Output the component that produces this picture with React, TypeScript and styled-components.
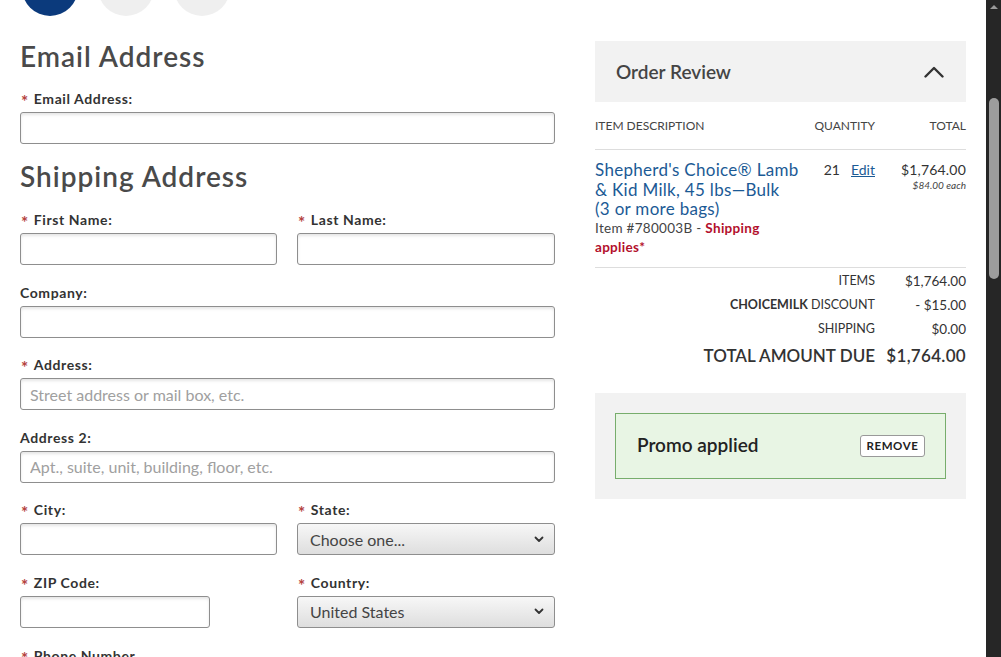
import React from "react";
import styled, { createGlobalStyle } from "styled-components";

const Global = createGlobalStyle`
  html, body { margin: 0; padding: 0; height: 657px; overflow: hidden; background: #fff; }
  body { font-family: Lato, "Open Sans", Arial, sans-serif; color: #333; }
  * { box-sizing: border-box; }
`;

const Shell = styled.div`
  display: flex;
  height: 657px;
  width: 1001px;
`;

const Page = styled.div`
  flex: 1;
  overflow: hidden;
  padding: 0 20px;
`;

const ScrollTrack = styled.div`
  width: 15px;
  flex: none;
  background: #262626;
  display: flex;
  flex-direction: column;
  align-items: center;
  padding-top: 5px;
`;

const ScrollArrow = styled.div`
  width: 0;
  height: 0;
  border-left: 4px solid transparent;
  border-right: 4px solid transparent;
  border-bottom: 4px solid #9a9a9a;
`;

const ScrollThumb = styled.div`
  margin-top: 89px;
  width: 10px;
  height: 181px;
  border-radius: 5px;
  background: #9d9d9d;
`;

const Steps = styled.div`
  display: flex;
  gap: 20px;
  margin-top: -40px;
  padding-left: 2px;
`;

const Step = styled.div<{ $active?: boolean }>`
  width: 56px;
  height: 56px;
  border-radius: 50%;
  background: ${(p) => (p.$active ? "#0b3a7c" : "#efefef")};
`;

const Columns = styled.div`
  display: grid;
  grid-template-columns: 535px 371px;
  column-gap: 40px;
  align-items: start;
`;

const FormCol = styled.div`
  display: flex;
  flex-direction: column;
`;

const Heading = styled.h2<{ $top: number }>`
  margin: ${(p) => p.$top}px 0 0;
  font-size: 28px;
  line-height: 34px;
  font-weight: 600;
  color: #4a4a4a;
  letter-spacing: 1px;
`;

const Fields = styled.div<{ $top: number }>`
  display: grid;
  grid-template-columns: 257px 258px;
  column-gap: 20px;
  row-gap: 18.6px;
  margin-top: ${(p) => p.$top}px;
`;

const Field = styled.div<{ $span?: boolean; $w?: number }>`
  grid-column: ${(p) => (p.$span ? "1 / -1" : "auto")};
  display: flex;
  flex-direction: column;
  gap: 4px;
  ${(p) => (p.$w ? `width: ${p.$w}px;` : "")}
`;

const Label = styled.label`
  height: 18px;
  font-size: 14px;
  line-height: 18px;
  font-weight: 700;
  color: #333;
  letter-spacing: 0.6px;
  display: flex;
  align-items: center;
  gap: 5px;
`;

const Star = styled.span`
  color: #b4423d;
  font-weight: 700;
  font-size: 17px;
  line-height: 1;
  height: 18px;
  margin-left: 1px;
  transform: translateY(3px);
`;

const Input = styled.input`
  width: 100%;
  height: 32px;
  border: 1px solid #8e8e8e;
  border-radius: 3px;
  background: #fff;
  box-shadow: inset 0 2px 3px rgba(0, 0, 0, 0.1);
  padding: 0 9px;
  font-family: Lato, Arial, sans-serif;
  font-size: 16px;
  color: #333;
  &::placeholder { color: #a0a0a0; }
`;

const SelectBox = styled.div`
  height: 32px;
  border: 1px solid #8e8e8e;
  border-radius: 3px;
  background: linear-gradient(#f7f7f7, #dedede);
  display: flex;
  align-items: center;
  padding: 0 10px 0 12px;
  font-size: 16px;
  color: #444;
`;

const SelectText = styled.span`
  flex: 1;
`;

const OrderCol = styled.div`
  display: flex;
  flex-direction: column;
  margin-top: 25px;
`;

const ReviewHeader = styled.div`
  height: 61px;
  background: #f2f2f2;
  display: flex;
  align-items: center;
  justify-content: space-between;
  padding: 0 22px 0 21px;
`;

const ReviewTitle = styled.div`
  font-size: 19px;
  font-weight: 600;
  color: #444;
`;

const Grid = styled.div`
  display: grid;
  grid-template-columns: 210px 1fr 91px;
`;

const HeadCell = styled.div<{ $right?: boolean }>`
  font-size: 12px;
  line-height: 17px;
  color: #444;
  text-transform: uppercase;
  padding: 15px 0;
  text-align: ${(p) => (p.$right ? "right" : "left")};
  border-bottom: 1px solid #ddd;
`;

const ItemRow = styled(Grid)`
  padding: 10px 0 10px;
  border-bottom: 1px solid #ddd;
`;

const ItemTitle = styled.a`
  display: block;
  font-size: 17px;
  line-height: 19.5px;
  letter-spacing: 0.3px;
  color: #1b5a95;
  text-decoration: none;
`;

const NoWrap = styled.span`
  white-space: nowrap;
`;

const ItemMeta = styled.div`
  font-size: 13.5px;
  line-height: 19px;
  letter-spacing: 0.3px;
  color: #444;
`;

const ShipNote = styled.b`
  color: #b3102c;
  font-weight: 700;
`;

const Qty = styled.div`
  display: flex;
  justify-content: flex-end;
  gap: 11px;
  font-size: 14px;
  line-height: 20px;
  color: #333;
`;

const EditLink = styled.a`
  color: #1b5a95;
  text-decoration: underline;
`;

const Price = styled.div`
  text-align: right;
  font-size: 14px;
  line-height: 20px;
  letter-spacing: 0.2px;
  color: #333;
`;

const Each = styled.div`
  font-size: 10px;
  line-height: 10px;
  font-style: italic;
  letter-spacing: 0;
  color: #444;
`;

const Summary = styled.div`
  display: grid;
  grid-template-columns: 1fr 91px;
  padding-top: 1px;
`;

const SumLabel = styled.div<{ $total?: boolean }>`
  text-align: right;
  font-size: ${(p) => (p.$total ? "17px" : "12.5px")};
  line-height: ${(p) => (p.$total ? "28px" : "24px")};
  font-weight: ${(p) => (p.$total ? 600 : 400)};
  color: #333;
  text-transform: uppercase;
  ${(p) => (p.$total ? "margin-top: 1px;" : "")}
`;

const SumValue = styled(SumLabel)`
  font-size: ${(p) => (p.$total ? "17px" : "13.5px")};
  letter-spacing: ${(p) => (p.$total ? "0.3px" : "0")};
`;

const PromoWrap = styled.div`
  margin-top: 23px;
  background: #f2f2f2;
  padding: 20px;
`;

const PromoBox = styled.div`
  height: 66px;
  background: #e8f5e4;
  border: 1px solid #77ad6c;
  display: flex;
  align-items: center;
  justify-content: space-between;
  padding: 0 20px 0 21px;
`;

const PromoText = styled.div`
  font-size: 19px;
  font-weight: 600;
  color: #222;
  margin-top: -2px;
`;

const RemoveBtn = styled.button`
  width: 65px;
  height: 22px;
  background: #fff;
  border: 1px solid #999;
  border-radius: 3px;
  font-family: Lato, Arial, sans-serif;
  font-size: 11.5px;
  font-weight: 700;
  letter-spacing: 0.6px;
  color: #222;
  padding: 0;
`;

const Chevron = () => (
  <svg width={20} height={12} viewBox="0 0 20 12" fill="none">
    <path d="M1.5 10.5 L10 2 L18.5 10.5" stroke="#333" strokeWidth="2.4" strokeLinecap="round" strokeLinejoin="round" />
  </svg>
);

const SmallChevronDown = () => (
  <svg width="10" height="7" viewBox="0 0 10 7" fill="none">
    <path d="M1.5 1.5 L5 5 L8.5 1.5" stroke="#333" strokeWidth="1.8" strokeLinecap="round" strokeLinejoin="round" />
  </svg>
);

const Req = ({ children }: { children: React.ReactNode }) => (
  <Label>
    <Star>*</Star>
    <span>{children}</span>
  </Label>
);

export default function App() {
  return (
    <>
      <Global />
      <Shell>
        <Page>
          <Steps>
            <Step $active />
            <Step />
            <Step />
          </Steps>
          <Columns>
            <FormCol>
              <Heading $top={23}>Email Address</Heading>
              <Fields $top={17}>
                <Field $span>
                  <Req>Email Address:</Req>
                  <Input type="email" />
                </Field>
              </Fields>
              <Heading $top={15}>Shipping Address</Heading>
              <Fields $top={18}>
                <Field>
                  <Req>First Name:</Req>
                  <Input />
                </Field>
                <Field>
                  <Req>Last Name:</Req>
                  <Input />
                </Field>
                <Field $span>
                  <Label>Company:</Label>
                  <Input />
                </Field>
                <Field $span>
                  <Req>Address:</Req>
                  <Input placeholder="Street address or mail box, etc." />
                </Field>
                <Field $span>
                  <Label>Address 2:</Label>
                  <Input placeholder="Apt., suite, unit, building, floor, etc." />
                </Field>
                <Field>
                  <Req>City:</Req>
                  <Input />
                </Field>
                <Field>
                  <Req>State:</Req>
                  <SelectBox>
                    <SelectText>Choose one...</SelectText>
                    <SmallChevronDown />
                  </SelectBox>
                </Field>
                <Field $w={190}>
                  <Req>ZIP Code:</Req>
                  <Input />
                </Field>
                <Field>
                  <Req>Country:</Req>
                  <SelectBox>
                    <SelectText>United States</SelectText>
                    <SmallChevronDown />
                  </SelectBox>
                </Field>
                <Field $span>
                  <Req>Phone Number</Req>
                  <Input type="tel" />
                </Field>
              </Fields>
            </FormCol>

            <OrderCol>
              <ReviewHeader>
                <ReviewTitle>Order Review</ReviewTitle>
                <Chevron />
              </ReviewHeader>
              <Grid>
                <HeadCell>Item Description</HeadCell>
                <HeadCell $right>Quantity</HeadCell>
                <HeadCell $right>Total</HeadCell>
              </Grid>
              <ItemRow>
                <div>
                  <ItemTitle href="#">
                    Shepherd's Choice® Lamb &amp; Kid Milk, 45 lbs—Bulk <NoWrap>(3 or more bags)</NoWrap>
                  </ItemTitle>
                  <ItemMeta>
                    Item #780003B - <ShipNote>Shipping applies*</ShipNote>
                  </ItemMeta>
                </div>
                <Qty>
                  <span>21</span>
                  <EditLink href="#">Edit</EditLink>
                </Qty>
                <Price>
                  $1,764.00
                  <Each>$84.00 each</Each>
                </Price>
              </ItemRow>
              <Summary>
                <SumLabel>Items</SumLabel>
                <SumValue>$1,764.00</SumValue>
                <SumLabel>
                  <b>Choicemilk</b> Discount
                </SumLabel>
                <SumValue>- $15.00</SumValue>
                <SumLabel>Shipping</SumLabel>
                <SumValue>$0.00</SumValue>
                <SumLabel $total>Total Amount Due</SumLabel>
                <SumValue $total>$1,764.00</SumValue>
              </Summary>
              <PromoWrap>
                <PromoBox>
                  <PromoText>Promo applied</PromoText>
                  <RemoveBtn>REMOVE</RemoveBtn>
                </PromoBox>
              </PromoWrap>
            </OrderCol>
          </Columns>
        </Page>
        <ScrollTrack>
          <ScrollArrow />
          <ScrollThumb />
        </ScrollTrack>
      </Shell>
    </>
  );
}
